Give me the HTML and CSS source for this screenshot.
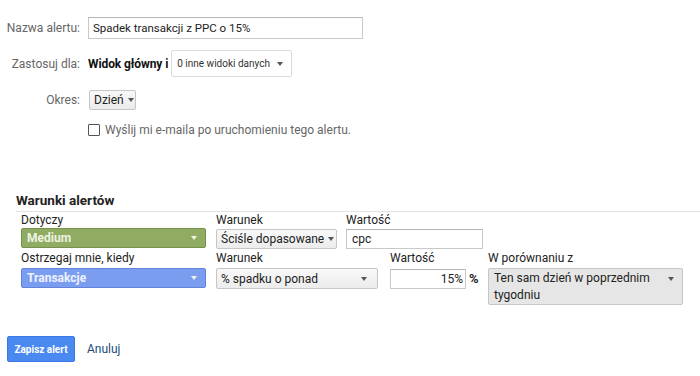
FILE: index.html
```html
<!DOCTYPE html>
<html lang="pl">
<head>
    <meta charset="UTF-8">
    <title>Alert</title>
    <link rel="stylesheet" href="styles.css">
</head>
<body>
    <div class="top-form">
        <div class="row row-name">
            <div class="label">Nazwa alertu:</div>
            <input class="text-input name-input" type="text" value="Spadek transakcji z PPC o 15%">
        </div>
        <div class="row row-views">
            <div class="label">Zastosuj dla:</div>
            <span class="views-main">Widok główny i</span>
            <div class="views-select">0 inne widoki danych <span class="arrow"></span></div>
        </div>
        <div class="row row-period">
            <div class="label">Okres:</div>
            <div class="btn-select">Dzień <span class="arrow"></span></div>
        </div>
        <div class="row row-mail">
            <div class="label"></div>
            <span class="checkbox"></span>
            <span class="mail-text">Wyślij mi e-maila po uruchomieniu tego alertu.</span>
        </div>
    </div>

    <div class="conditions">
        <div class="cond-title">Warunki alertów</div>
        <div class="cond-body">
            <div class="cond-row">
                <div class="cell c-first">
                    <div class="cell-label">Dotyczy</div>
                    <div class="dim-select dim-green">Medium <span class="arrow white"></span></div>
                </div>
                <div class="cell c-match">
                    <div class="cell-label">Warunek</div>
                    <div class="btn-select full">Ściśle dopasowane <span class="arrow"></span></div>
                </div>
                <div class="cell c-value">
                    <div class="cell-label">Wartość</div>
                    <input class="text-input cond-input" type="text" value="cpc">
                </div>
            </div>
            <div class="cond-row">
                <div class="cell c-first">
                    <div class="cell-label">Ostrzegaj mnie, kiedy</div>
                    <div class="dim-select dim-blue">Transakcje <span class="arrow white"></span></div>
                </div>
                <div class="cell c-cond">
                    <div class="cell-label">Warunek</div>
                    <div class="btn-select full">% spadku o ponad <span class="arrow"></span></div>
                </div>
                <div class="cell c-pct">
                    <div class="cell-label">Wartość</div>
                    <div class="pct-wrap">
                        <input class="text-input pct-input" type="text" value="15%">
                        <span class="pct-sign">%</span>
                    </div>
                </div>
                <div class="cell c-compare">
                    <div class="cell-label">W porównaniu z</div>
                    <div class="btn-select compare">
                        <span>Ten sam dzień w poprzednim tygodniu</span>
                        <span class="arrow"></span>
                    </div>
                </div>
            </div>
        </div>
    </div>

    <div class="actions">
        <button class="save-btn">Zapisz alert</button>
        <a class="cancel" href="#">Anuluj</a>
    </div>
</body>
</html>
```

FILE: styles.css
```css
body { margin: 0; font-family: Roboto, "Noto Sans", sans-serif; font-size: 12px; color: #222; background: #fff; }

.top-form { padding-top: 17px; }
.row { display: flex; align-items: center; }
.label { width: 80px; margin-right: 8px; text-align: right; color: #666; font-size: 12px; flex-shrink: 0; }
.row-name { height: 22px; }
.row-views { height: 27px; margin-top: 11px; }
.row-period { height: 20px; margin-top: 13px; }
.row-mail { height: 14px; margin-top: 13px; }

.text-input { box-sizing: border-box; font-family: inherit; font-size: 12px; color: #222; border: 1px solid #c9c9c9; border-top-color: #b5b5b5; padding: 0 5px; margin: 0; outline: none; background: #fff; }
.name-input { width: 275px; height: 22px; font-size: 11.5px; padding-left: 4px; }

.views-main { font-weight: bold; color: #111; margin-right: 3px; letter-spacing: -0.1px; }
.views-select { box-sizing: border-box; height: 27px; width: 121px; border: 1px solid #dcdcdc; border-radius: 2px; display: flex; align-items: center; justify-content: space-between; padding: 0 8px 0 5px; font-size: 10px; white-space: nowrap; color: #333; background: #fff; }

.arrow { display: inline-block; width: 0; height: 0; border-left: 3.5px solid transparent; border-right: 3.5px solid transparent; border-top: 4px solid #555; flex-shrink: 0; }
.arrow.white { border-top-color: #eef3e4; }

.btn-select { box-sizing: border-box; display: inline-flex; align-items: center; gap: 4px; height: 20px; padding: 0 4px; border: 1px solid #c6c6c6; border-radius: 2px; background: linear-gradient(#f8f8f8, #ececec); color: #222; font-size: 12px; white-space: nowrap; }
.row-period .btn-select { margin-left: 1px; width: 47px; }

.checkbox { box-sizing: border-box; width: 12px; height: 12px; border: 1px solid #555; border-radius: 1px; margin-right: 5px; }
.mail-text { color: #666; font-size: 12px; }

.conditions { margin-top: 55px; padding-left: 16px; }
.cond-title { font-weight: bold; font-size: 13.5px; color: #222; height: 17px; line-height: 17px; padding-bottom: 2px; border-bottom: 1px solid #e2e2e2; }
.cond-body { padding-left: 5px; }
.cond-row { display: flex; }
.cell-label { font-size: 12px; color: #222; height: 16px; line-height: 16px; margin-bottom: 0; }
.cond-row:last-child .cell-label { margin-top: 1px; margin-bottom: 2px; }

.c-first { width: 185px; margin-right: 10px; }
.c-match { width: 121px; margin-right: 9px; }
.c-value { width: 137px; }
.c-cond { width: 162px; margin-right: 12px; }
.c-pct { width: 90px; margin-right: 8px; }
.c-compare { width: 195px; }

.dim-select { box-sizing: border-box; height: 20px; border-radius: 2px; display: flex; align-items: center; justify-content: space-between; padding: 0 8px 0 5px; font-weight: bold; color: #eef3e4; font-size: 12px; }
.dim-green { background: #8fac62; border: 1px solid #76914c; }
.dim-blue { background: #7b9df0; border: 1px solid #6383db; color: #eef2ff; }

.btn-select.full { display: flex; justify-content: space-between; width: 100%; height: 20px; padding: 0 5px 0 4px; }
.cond-row:first-child .btn-select.full { margin-top: 1px; }
.cond-row:last-child .btn-select.full { height: 21px; padding-right: 10px; }
.cond-input { width: 137px; height: 20px; margin-top: 1px; }

.pct-wrap { display: flex; align-items: center; }
.pct-input { width: 76px; height: 20px; text-align: right; padding-right: 2px; margin-top: 1px; }
.pct-sign { font-weight: bold; font-size: 13px; margin-left: 3px; color: #222; }

.btn-select.compare { display: flex; align-items: flex-start; justify-content: space-between; width: 195px; height: 37px; padding: 1px 8px 0 5px; line-height: 17px; background: #e6e6e6; border-color: #c6c6c6; white-space: normal; }
.btn-select.compare span:first-child { width: 170px; }
.btn-select.compare .arrow { margin-top: 7px; }

.actions { display: flex; align-items: center; margin-top: 31px; padding-left: 7px; }
.save-btn { width: 68px; height: 26px; border: 1px solid #3b78e7; border-radius: 2px; background: #4a89f0; color: #fff; font-family: inherit; font-weight: bold; font-size: 10px; padding: 0; }
.cancel { margin-left: 12px; color: #234a7c; text-decoration: none; font-size: 12px; }
```
